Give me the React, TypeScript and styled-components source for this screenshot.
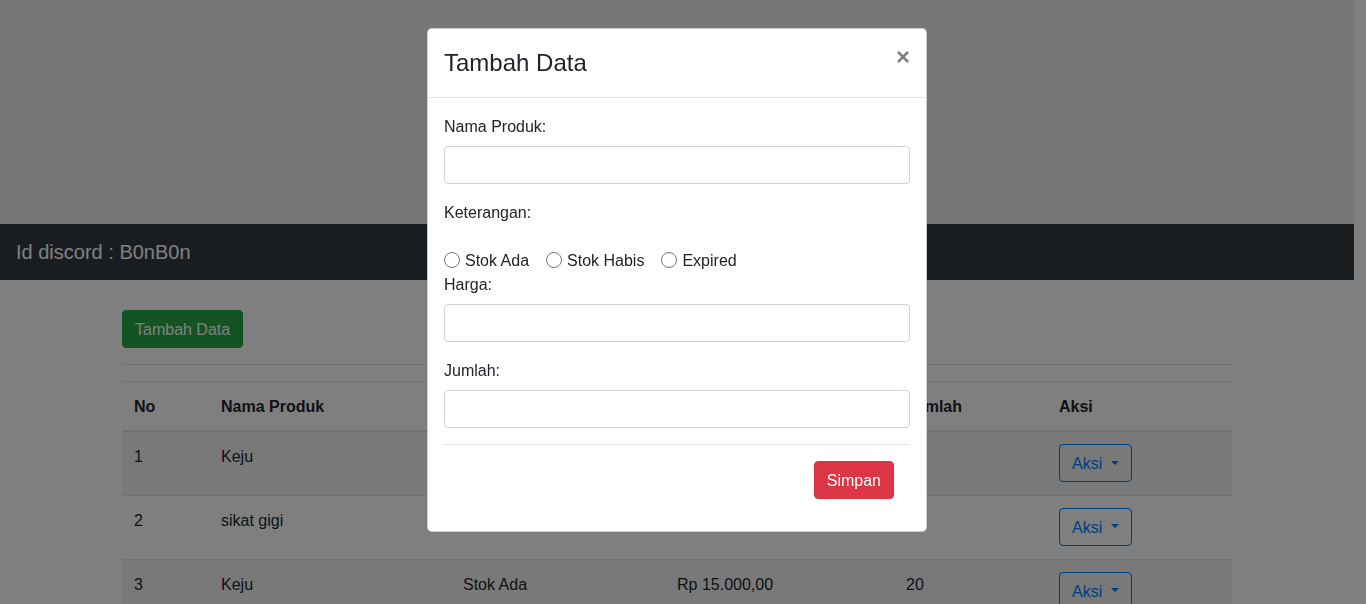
import React from 'react'
import styled, { createGlobalStyle } from 'styled-components'

const GlobalStyle = createGlobalStyle`
  * { box-sizing: border-box; }
  body {
    margin: 0;
    padding-right: 12px;
    overflow: hidden;
    background: #fff;
    color: #212529;
    font-family: "Liberation Sans", Arial, sans-serif;
    font-size: 16px;
    line-height: 1.5;
  }
`

const products = [
  { no: 1, nama: 'Keju', ket: 'Stok Ada', harga: 'Rp 15.000,00', jumlah: 20 },
  { no: 2, nama: 'sikat gigi', ket: 'Stok Habis', harga: 'Rp 8.000,00', jumlah: 0 },
  { no: 3, nama: 'Keju', ket: 'Stok Ada', harga: 'Rp 15.000,00', jumlah: 20 },
]

const columns = [
  { title: 'No', width: 87 },
  { title: 'Nama Produk', width: 242 },
  { title: 'Keterangan', width: 214 },
  { title: 'Harga', width: 229 },
  { title: 'Jumlah', width: 153 },
  { title: 'Aksi', width: 185 },
]

const App: React.FC = () => {
  return (
    <>
      <GlobalStyle />
      <Jumbotron />
      <Navbar>
        <Brand>Id discord : B0nB0n</Brand>
      </Navbar>
      <Container>
        <Button variant="success">Tambah Data</Button>
        <Divider />
        <StyledTable>
          <colgroup>
            {columns.map((c) => (
              <col key={c.title} style={{ width: c.width }} />
            ))}
          </colgroup>
          <thead>
            <tr>
              {columns.map((c) => (
                <StyledTH key={c.title}>{c.title}</StyledTH>
              ))}
            </tr>
          </thead>
          <tbody>
            {products.map((p) => (
              <StyledTR key={p.no} striped={p.no % 2 === 1}>
                <StyledTD>{p.no}</StyledTD>
                <StyledTD>{p.nama}</StyledTD>
                <StyledTD>{p.ket}</StyledTD>
                <StyledTD>{p.harga}</StyledTD>
                <StyledTD>{p.jumlah}</StyledTD>
                <ActionTD>
                  <OutlineButton>
                    Aksi<Caret />
                  </OutlineButton>
                </ActionTD>
              </StyledTR>
            ))}
          </tbody>
        </StyledTable>
      </Container>

      <Backdrop />
      <ModalWrap>
        <Dialog>
          <ModalHeader>
            <ModalTitle>Tambah Data</ModalTitle>
            <CloseButton aria-label="Close">×</CloseButton>
          </ModalHeader>
          <ModalBody>
            <FormGroup>
              <Label>Nama Produk:</Label>
              <Input type="text" />
            </FormGroup>
            <Label>Keterangan:</Label>
            <RadioRow>
              <RadioItem>
                <Radio type="radio" name="ket" />Stok Ada
              </RadioItem>
              <RadioItem>
                <Radio type="radio" name="ket" />Stok Habis
              </RadioItem>
              <RadioItem>
                <Radio type="radio" name="ket" />Expired
              </RadioItem>
            </RadioRow>
            <FormGroup>
              <Label>Harga:</Label>
              <Input type="text" />
            </FormGroup>
            <FormGroup>
              <Label>Jumlah:</Label>
              <Input type="text" />
            </FormGroup>
            <Divider />
            <FormFooter>
              <Button variant="danger">Simpan</Button>
            </FormFooter>
          </ModalBody>
        </Dialog>
      </ModalWrap>
    </>
  )
}

const Jumbotron = styled.div`
  height: 224px;
  background: #e9ecef;
`

const Navbar = styled.nav`
  display: flex;
  align-items: center;
  height: 56px;
  padding: 8px 16px;
  background: #343a40;
`

const Brand = styled.span`
  font-size: 20px;
  line-height: 30px;
  color: #fff;
`

const Container = styled.div`
  width: 1140px;
  margin: 0 auto;
  padding: 30px 15px 0;
`

const Button = styled.button<{ variant: 'success' | 'danger' }>`
  display: inline-block;
  height: 38px;
  padding: 7px 12px 5px;
  font-family: inherit;
  font-size: 16px;
  line-height: 24px;
  color: #fff;
  border: 1px solid ${(p) => (p.variant === 'success' ? '#28a745' : '#dc3545')};
  background: ${(p) => (p.variant === 'success' ? '#28a745' : '#dc3545')};
  border-radius: 4px;
`

const Divider = styled.hr`
  margin: 16px 0;
  border: 0;
  border-top: 1px solid rgba(0, 0, 0, 0.1);
`

const StyledTable = styled.table`
  width: 1110px;
  table-layout: fixed;
  border-collapse: collapse;
  color: #212529;
`

const StyledTH = styled.th`
  padding: 13px 12px 11px;
  text-align: left;
  font-weight: 700;
  border-top: 1px solid #dee2e6;
  border-bottom: 2px solid #dee2e6;
  vertical-align: bottom;
`

const StyledTR = styled.tr<{ striped: boolean }>`
  height: 64px;
  background: ${(p) => (p.striped ? 'rgba(0, 0, 0, 0.05)' : 'transparent')};
`

const StyledTD = styled.td`
  padding: 13px 12px 11px;
  border-top: 1px solid #dee2e6;
  vertical-align: top;
`

const ActionTD = styled(StyledTD)`
  padding-top: 12px;
`

const OutlineButton = styled.button`
  display: inline-block;
  height: 38px;
  padding: 7px 12px 5px;
  font-family: inherit;
  font-size: 16px;
  line-height: 24px;
  color: #007bff;
  background: transparent;
  border: 1px solid #007bff;
  border-radius: 4px;
`

const Caret = styled.span`
  display: inline-block;
  margin-left: 0.52em;
  vertical-align: 0.255em;
  border-top: 0.3em solid;
  border-left: 0.3em solid transparent;
  border-right: 0.3em solid transparent;
`

const Backdrop = styled.div`
  position: fixed;
  inset: 0;
  background: rgba(0, 0, 0, 0.5);
  z-index: 10;
`

const ModalWrap = styled.div`
  position: fixed;
  inset: 0;
  padding-right: 12px;
  z-index: 20;
`

const Dialog = styled.div`
  width: 500px;
  margin: 28px auto;
  background: #fff;
  border: 1px solid rgba(0, 0, 0, 0.2);
  border-radius: 5px;
`

const ModalHeader = styled.div`
  display: flex;
  align-items: flex-start;
  justify-content: space-between;
  padding: 16px;
  border-bottom: 1px solid #dee2e6;
`

const ModalTitle = styled.h4`
  margin: 0;
  font-size: 24px;
  font-weight: 500;
  line-height: 36px;
`

const CloseButton = styled.button`
  margin: -16px -16px -16px auto;
  padding: 16px;
  border: 0;
  background: transparent;
  font-family: inherit;
  font-size: 24px;
  font-weight: 700;
  line-height: 1;
  color: #000;
  text-shadow: 0 1px 0 #fff;
  opacity: 0.5;
`

const ModalBody = styled.div`
  padding: 16px;
`

const FormGroup = styled.div`
  margin-bottom: 16px;
`

const Label = styled.label`
  display: block;
  margin-bottom: 8px;
  padding-top: 1px;
  line-height: 23px;
`

const Input = styled.input`
  display: block;
  width: 100%;
  height: 38px;
  padding: 6px 12px;
  font-size: 16px;
  border: 1px solid #ced4da;
  border-radius: 4px;
  background: #fff;
`

const RadioRow = styled.div`
  display: flex;
  gap: 17px;
  padding-top: 16px;
`

const RadioItem = styled.label`
  display: flex;
  align-items: center;
  gap: 5px;
  padding-top: 1px;
  line-height: 23px;
`

const Radio = styled.input`
  width: 16px;
  height: 16px;
  margin: 0 0 2px;
`

const FormFooter = styled.div`
  display: flex;
  justify-content: flex-end;
  padding-right: 16px;
  margin-bottom: 16px;
`

export default App
